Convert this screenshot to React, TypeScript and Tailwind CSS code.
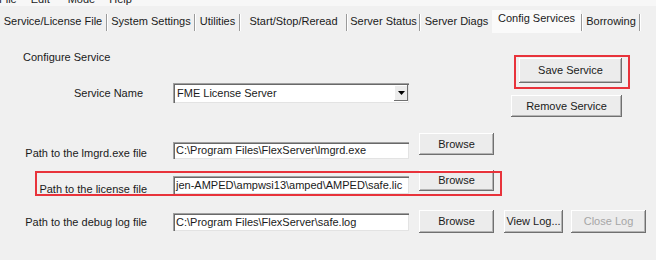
import type { ReactNode } from "react";

const tabs = [
  { label: "Service/License File", w: "w-[106px]" },
  { label: "System Settings", w: "w-[86px]" },
  { label: "Utilities", w: "w-[43px]" },
  { label: "Start/Stop/Reread", w: "w-[105px]" },
  { label: "Server Status", w: "w-[71px]" },
  { label: "Server Diags", w: "w-[71px]", noSep: true },
  { label: "Config Services", w: "w-[89px]", active: true },
  { label: "Borrowing", w: "w-[56px]" },
];

function Sep() {
  return <div className="mt-[8px] h-[17px] w-[2px] shrink-0 border-l border-r border-l-[#9a9a9a] border-r-white" />;
}

function Btn({ children, className = "", disabled = false }: { children: ReactNode; className?: string; disabled?: boolean }) {
  return (
    <div
      className={`flex shrink-0 items-center justify-center bg-[#ececec] leading-[13px] shadow-[inset_-1px_-1px_0_#707070,inset_1px_1px_0_#ffffff,inset_-2px_-2px_0_#b4b4b4] ${
        disabled ? "text-[#a6a6a6]" : "text-[#1a1a1a]"
      } ${className}`}
    >
      {children}
    </div>
  );
}

function TextBox({ value, className = "" }: { value: string; className?: string }) {
  return (
    <div
      className={`flex w-[236px] shrink-0 items-center overflow-hidden whitespace-nowrap bg-white pl-[3px] leading-[13px] shadow-[inset_1px_1px_0_#a0a0a0,inset_2px_2px_0_#696969,inset_-1px_-1px_0_#e3e3e3] ${className}`}
    >
      {value}
    </div>
  );
}

export default function App() {
  return (
    <div className="h-[260px] w-[656px] overflow-hidden bg-[#f0f0f0] font-['Liberation_Sans',Arial,sans-serif] text-[11px] text-[#1a1a1a]">
      {/* menu bar, cut off at the top */}
      <div className="h-[6px] overflow-hidden bg-[#f7f7f7]">
        <div className="-mt-[7px] flex leading-[12px]">
          <span className="ml-[-1px]">File</span>
          <span className="ml-[14px]">Edit</span>
          <span className="ml-[18px]">Mode</span>
          <span className="ml-[14px]">Help</span>
        </div>
      </div>

      {/* tab strip */}
      <div className="flex h-[27px]">
        {tabs.map((t) => (
          <div key={t.label} className="flex">
            {t.active ? (
              <div className={`mt-[4px] flex h-[23px] justify-center bg-[#fafafa] pt-[2px] leading-[13px] ${t.w}`}>{t.label}</div>
            ) : (
              <div className={`flex justify-center whitespace-nowrap pt-[9px] leading-[13px] ${t.w}`}>{t.label}</div>
            )}
            {!t.noSep && <Sep />}
          </div>
        ))}
      </div>

      {/* top section */}
      <div className="flex h-[100px]">
        <div className="w-[511px] pl-[23px]">
          <div className="mt-[18px] leading-[13px]">Configure Service</div>
          <div className="mt-[19px] flex h-[20px] items-center">
            <div className="w-[120px] text-right leading-[13px]">Service Name</div>
            <div className="ml-[30px] flex h-[20px] w-[236px] items-center justify-between bg-white pl-[4px] leading-[13px] shadow-[inset_1px_1px_0_#a0a0a0,inset_2px_2px_0_#696969,inset_-1px_-1px_0_#e3e3e3]">
              <span>FME License Server</span>
              <div className="mr-[1px] flex h-[16px] w-[14px] items-center justify-center bg-[#ececec] shadow-[inset_-1px_-1px_0_#707070,inset_1px_1px_0_#ffffff]">
                <svg width="7" height="4" viewBox="0 0 7 4">
                  <path d="M0 0h7L3.5 4z" fill="#000" />
                </svg>
              </div>
            </div>
          </div>
        </div>
        <div className="flex flex-col">
          <div className="relative ml-[8px] mt-[25px]">
            <Btn className="h-[25px] w-[103px]">Save Service</Btn>
            <div className="pointer-events-none absolute -left-[5px] -top-[3px] h-[34px] w-[116px] border-2 border-[#e8333b]" />
          </div>
          <Btn className="mt-[12px] h-[22px] w-[111px]">Remove Service</Btn>
        </div>
      </div>

      {/* path rows */}
      <div className="flex items-start">
        <div className="mt-[14px] w-[147px] text-right leading-[13px]">Path to the lmgrd.exe file</div>
        <TextBox className="ml-[26px] mt-[9px] h-[17px]" value="C:\Program Files\FlexServer\lmgrd.exe" />
        <Btn className="ml-[10px] h-[22px] w-[75px]">Browse</Btn>
      </div>

      <div className="relative mt-[10px] flex items-start">
        <div className="mt-[13px] w-[147px] text-right leading-[13px]">Path to the license file</div>
        <TextBox className="ml-[26px] mt-[6px] h-[18px]" value="jen-AMPED\ampwsi13\amped\AMPED\safe.lic" />
        <Btn className="ml-[10px] h-[21px] w-[75px]">Browse</Btn>
        <div className="pointer-events-none absolute left-[35px] top-[1px] h-[25px] w-[467px] border-2 border-[#e8333b]" />
      </div>

      <div className="mt-[14px] flex items-start">
        <div className="mt-[6px] w-[147px] text-right leading-[13px]">Path to the debug log file</div>
        <TextBox className="ml-[26px] mt-[3px] h-[18px]" value="C:\Program Files\FlexServer\safe.log" />
        <Btn className="ml-[10px] h-[23px] w-[75px]">Browse</Btn>
        <Btn className="ml-[10px] h-[23px] w-[59px]">View Log...</Btn>
        <Btn className="ml-[8px] h-[23px] w-[75px]" disabled>
          Close Log
        </Btn>
      </div>
    </div>
  );
}
